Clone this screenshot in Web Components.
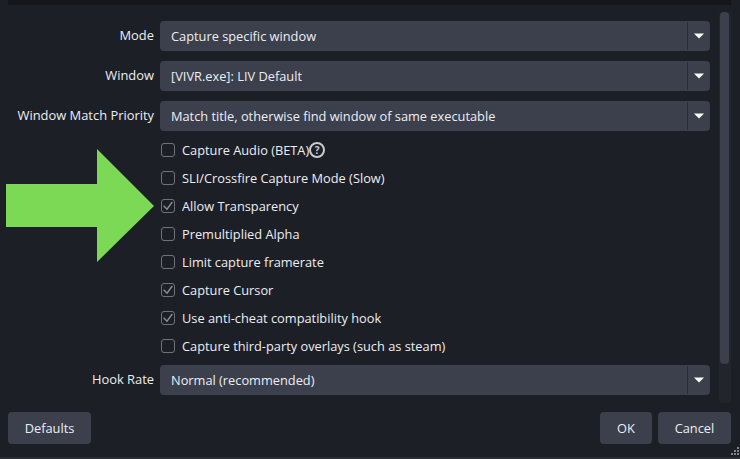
<!DOCTYPE html>
<html>
<head>
<meta charset="utf-8">
<style>
  html, body { margin: 0; height: 100%; background: #1d1f26; }
  body { overflow: hidden; font: 12.8px "Open Sans", sans-serif; color: #eceef3; }
</style>
</head>
<body>
<source-dialog>
  <form-row label="Mode"><combo-box>Capture specific window</combo-box></form-row>
  <form-row label="Window"><combo-box>[VIVR.exe]: LIV Default</combo-box></form-row>
  <form-row label="Window Match Priority" tight><combo-box>Match title, otherwise find window of same executable</combo-box></form-row>
  <check-row>Capture Audio (BETA)<help-icon></help-icon></check-row>
  <check-row>SLI/Crossfire Capture Mode (Slow)</check-row>
  <check-row checked>Allow Transparency</check-row>
  <check-row>Premultiplied Alpha</check-row>
  <check-row>Limit capture framerate</check-row>
  <check-row checked>Capture Cursor</check-row>
  <check-row checked>Use anti-cheat compatibility hook</check-row>
  <check-row>Capture third-party overlays (such as steam)</check-row>
  <form-row label="Hook Rate" last><combo-box>Normal (recommended)</combo-box></form-row>
  <push-button slot="left">Defaults</push-button>
  <push-button slot="right" style="width:52px">OK</push-button>
  <push-button slot="right" style="width:73px">Cancel</push-button>
</source-dialog>

<script>
class SourceDialog extends HTMLElement {
  constructor() {
    super();
    this.attachShadow({ mode: "open" });
    this.shadowRoot.innerHTML = `
      <style>
        :host { display: flex; flex-direction: column; height: 459px; position: relative; box-sizing: border-box; }
        .topbar { height: 5px; margin: 0 9px 0 8px; background: #15161b; flex: none; }
        .middle { display: flex; flex: none; height: 399px; }
        .form { width: 710px; padding-top: 16px; display: flex; flex-direction: column; box-sizing: border-box; }
        .track { width: 12px; margin: 7px 0 0 9px; height: 391px; border-radius: 4px; background: #23252c; padding: 0 2px 0 1px; box-sizing: border-box; }
        .thumb { height: 352px; border-radius: 4px; background: #3c404d; }
        .buttons { display: flex; justify-content: space-between; padding: 8px 9px 0 8px; }
        .right { display: flex; gap: 6px; }
        .arrow { position: absolute; left: 6px; top: 149px; }
        .grip { position: absolute; right: 1px; bottom: 4px; }
        .edge { position: absolute; left: 0; right: 0; bottom: 0; height: 2px; background: #2d2f37; }
      </style>
      <div class="topbar"></div>
      <div class="middle">
        <div class="form"><slot></slot></div>
        <div class="track"><div class="thumb"></div></div>
      </div>
      <div class="buttons">
        <slot name="left"></slot>
        <div class="right"><slot name="right"></slot></div>
      </div>
      <svg class="arrow" width="148" height="113" viewBox="0 0 148 113">
        <polygon points="0,35 91,35 91,0 148,57 91,113 91,78 0,78" fill="#7bd955"/>
      </svg>
      <svg class="grip" width="8" height="8" viewBox="0 0 8 8" fill="#83868e">
        <rect x="6" y="0" width="2" height="2"/>
        <rect x="3" y="3" width="2" height="2"/><rect x="6" y="3" width="2" height="2"/>
        <rect x="0" y="6" width="2" height="2"/><rect x="3" y="6" width="2" height="2"/><rect x="6" y="6" width="2" height="2"/>
      </svg>
      <div class="edge"></div>`;
  }
}

class FormRow extends HTMLElement {
  constructor() {
    super();
    this.attachShadow({ mode: "open" });
    this.shadowRoot.innerHTML = `
      <style>
        :host { display: flex; align-items: center; gap: 6px; height: 30px; flex: none; margin-bottom: 10px; }
        :host([tight]) { margin-bottom: 5px; }
        :host([last]) { margin: 5px 0 0; }
        label { width: 154px; text-align: right; flex: none; position: relative; top: -1px; font-size: 12.9px; }
        .field { flex: 1; min-width: 0; }
      </style>
      <label></label>
      <div class="field"><slot></slot></div>`;
    this.shadowRoot.querySelector("label").textContent = this.getAttribute("label");
  }
}

class ComboBox extends HTMLElement {
  constructor() {
    super();
    this.attachShadow({ mode: "open" });
    this.shadowRoot.innerHTML = `
      <style>
        :host { display: flex; height: 30px; background: #3c404d; border-radius: 4px; align-items: center; }
        .text { flex: 1; padding-left: 11px; }
        .btn { width: 23px; height: 28px; border-left: 1px solid #2a2c35; display: flex; align-items: center; justify-content: center; box-sizing: border-box; }
      </style>
      <div class="text"><slot></slot></div>
      <div class="btn">
        <svg width="10" height="6" viewBox="0 0 10 6"><polygon points="0,0.5 10,0.5 5,5.5" fill="#fefefe"/></svg>
      </div>`;
  }
}

class CheckRow extends HTMLElement {
  constructor() {
    super();
    this.attachShadow({ mode: "open" });
    const tick = this.hasAttribute("checked")
      ? `<svg width="14" height="14" viewBox="0 0 14 14"><path d="M2.6 6.8 L6 10.2 L11.3 3" fill="none" stroke="#90939a" stroke-width="1.3"/></svg>`
      : "";
    this.shadowRoot.innerHTML = `
      <style>
        :host { display: flex; align-items: center; gap: 7px; height: 28px; flex: none; padding-left: 161px; }
        .box { width: 14px; height: 14px; box-sizing: border-box; border: 1px solid #6f727a; border-radius: 3px; display: flex; align-items: center; justify-content: center; flex: none; }
        .box svg { flex: none; }
        .label { display: flex; align-items: center; }
      </style>
      <div class="box">${tick}</div>
      <div class="label"><slot></slot></div>`;
  }
}

class HelpIcon extends HTMLElement {
  constructor() {
    super();
    this.attachShadow({ mode: "open" });
    this.shadowRoot.innerHTML = `
      <style>
        :host { display: inline-flex; margin-left: 0; }
        span { width: 16px; height: 16px; box-sizing: border-box; border: 2px solid #c9cbd0; border-radius: 50%; font-size: 10px; font-weight: 700; line-height: 12px; text-align: center; color: #c9cbd0; }
      </style>
      <span>?</span>`;
  }
}

class PushButton extends HTMLElement {
  constructor() {
    super();
    this.attachShadow({ mode: "open" });
    this.shadowRoot.innerHTML = `
      <style>
        :host { display: flex; align-items: center; justify-content: center; height: 32px; min-width: 83px; background: #3c404d; border-radius: 4px; box-sizing: border-box; }
        :host([slot="right"]) { min-width: 0; }
      </style>
      <slot></slot>`;
  }
}

customElements.define("source-dialog", SourceDialog);
customElements.define("form-row", FormRow);
customElements.define("combo-box", ComboBox);
customElements.define("check-row", CheckRow);
customElements.define("help-icon", HelpIcon);
customElements.define("push-button", PushButton);
</script>
</body>
</html>
